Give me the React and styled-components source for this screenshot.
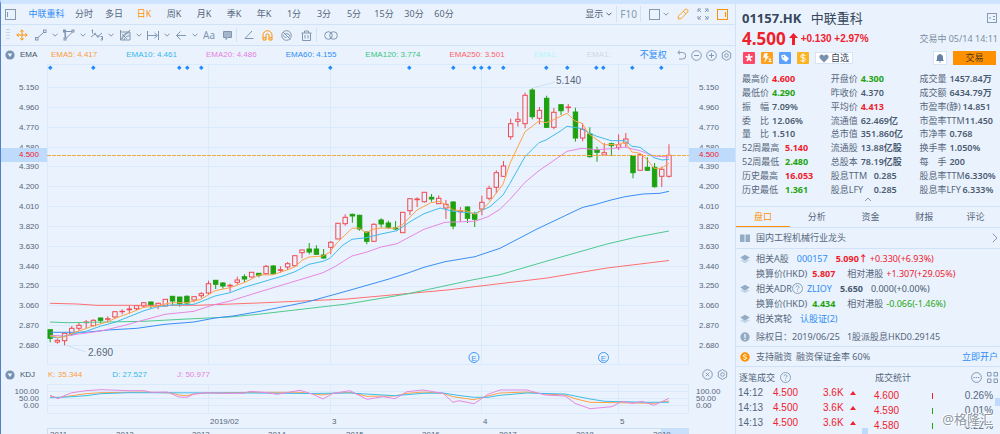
import React from 'react';
import styled, { createGlobalStyle } from 'styled-components';

const CANDLE_STEP = 7.195;

// [type, high, body top, body bottom, low]
const candles = [
  ['d', 265, 265.7, 274.3, 278.3], ['u', 275, 276.3, 278, 279.7], ['u', 269.3, 269.3, 276.7, 281.3],
  ['u', 262, 264.3, 270, 272], ['u', 258.3, 261.3, 264.3, 266.7], ['u', 256, 258, 258.7, 264.3],
  ['u', 255.3, 256.3, 261.7, 262.3], ['d', 253.7, 254, 256.3, 259.3], ['u', 252.3, 254.7, 255.3, 258],
  ['u', 247.3, 247.7, 253, 254.3], ['u', 245.3, 247.3, 247.7, 250.3], ['u', 241.7, 245, 245.7, 249.3],
  ['u', 241, 241.7, 244.7, 246], ['u', 238.3, 238.7, 242, 244], ['d', 237.7, 238, 241, 244.7],
  ['u', 238.7, 239.3, 242, 245.3], ['u', 235.3, 235.3, 242, 242], ['d', 232, 232.3, 237, 241],
  ['d', 233, 233, 239.7, 242.7], ['d', 231.3, 232.3, 239, 241.3], ['u', 232.3, 232.7, 236, 238.3],
  ['u', 228, 229.7, 231.7, 234.3], ['u', 216.7, 219.7, 229, 231], ['d', 216.3, 216.3, 220.3, 225],
  ['d', 218.3, 219, 222, 224.7], ['u', 219.7, 221.3, 222, 227.7], ['u', 212.7, 216, 218.3, 220.7],
  ['d', 210.3, 212.7, 215, 218], ['u', 208.3, 208.3, 213, 213.7], ['d', 209, 209.3, 211.3, 213.3],
  ['u', 201, 202.3, 209.7, 210.7], ['d', 201, 202, 209.7, 210.7], ['u', 202.3, 205.7, 206.3, 208.7],
  ['u', 198, 199.7, 203, 206], ['u', 191.3, 191.7, 201.7, 202.7], ['u', 185.7, 186, 188.7, 194.3],
  ['d', 179, 185, 188, 190.3], ['d', 181.3, 185, 190.3, 191], ['d', 185, 191, 194, 194.7],
  ['u', 177, 178.3, 183.3, 190.3], ['u', 159, 159.3, 175, 175], ['u', 150.3, 153.3, 159.7, 161.7],
  ['d', 149.7, 150.3, 152, 158.7], ['d', 150.7, 151.3, 165, 166.7], ['d', 167.7, 168, 177.3, 180.3],
  ['u', 159.3, 160.3, 177.3, 177.7], ['d', 154.3, 156, 160, 163.3], ['d', 156.7, 159, 163.3, 165],
  ['d', 157, 164, 165, 166], ['u', 148, 148.3, 168.7, 168.7], ['u', 134, 134.7, 146.7, 151],
  ['u', 133.3, 135, 135.7, 143], ['u', 128, 128.3, 137.7, 138.7], ['d', 130, 133.3, 135, 137.7],
  ['u', 131.3, 134.3, 139.7, 140], ['u', 136, 140.3, 144, 155], ['d', 137.3, 138, 162, 165.3],
  ['u', 143, 147, 147.7, 157.7], ['d', 142.3, 143, 154.3, 159], ['d', 147.7, 150, 155.3, 163],
  ['u', 131.7, 138.3, 145, 151.3], ['u', 121.7, 124.3, 134.3, 136.3], ['u', 106.3, 108.7, 123.3, 129.3],
  ['u', 97, 102, 112.3, 113], ['u', 54.7, 59.7, 72.7, 75.7], ['u', 48, 55.3, 57.3, 62.7],
  ['u', 28.7, 31.3, 59.7, 64.3], ['d', 24.3, 26, 52.7, 55.3], ['u', 43, 46.3, 54.3, 60.3],
  ['d', 31.7, 34.3, 63.3, 64], ['u', 44, 48.3, 63.3, 65.3], ['d', 40, 40.7, 46.7, 51],
  ['u', 40, 43, 43.7, 48.7], ['d', 43.7, 48, 74, 77.7], ['u', 59.3, 65.3, 74, 77.3],
  ['d', 63.3, 70, 92.7, 93.7], ['d', 82.7, 86.3, 88.3, 97.7], ['u', 79, 88.7, 91, 91.7],
  ['d', 78.7, 79.7, 81.7, 91.7], ['u', 70.3, 80.7, 83.3, 86], ['u', 69, 75, 79, 83.3],
  ['d', 91, 91.7, 108.7, 114.3], ['u', 89, 90.7, 106.3, 106.3], ['d', 93.3, 103.3, 106.3, 107],
  ['d', 99, 103.3, 122.7, 123.7], ['u', 102.7, 105.3, 112.3, 123], ['u', 80.3, 91.3, 112.3, 113.7],
];

const emaLines = [
  { color: '#ff7070', points: '3,239.3 30,240 50,241.3 150,241.3 211,239 300,235 400,226 500,214 560,204 622,196.5' },
  { color: '#4fc98f', points: '3,258 20,258.7 97,257.3 140,255 183,253 211,250.3 300,240 360,230 425,216 453,210.7 500,197 560,180 590,173 622,167' },
  { color: '#3a8ef5', points: '3,268.3 39,268.3 61,266 90,264.3 118,260.3 147,258 168,254 186,252 211,247.7 260,238 300,227 341,215.3 360,209.3 377,203.3 398,197.7 428,192.7 453,184.3 490,165 530,146 536,143.3 549,140.3 564,136 578,132.7 596,130 613,129.3 622,127.3' },
  { color: '#e787e2', points: '3,271.3 18,272 32,270 54,267 75,262 97,256 118,250.3 147,247.3 166,241 183,237 197,232.7 211,228.3 253,215.7 276,208.7 286,203.7 305,192 319,188.3 334,183 350,179.7 363,172.7 377,165.3 398,158.3 428,157.3 441,152.7 453,145.3 463,135.3 478,118.3 492,106.7 506,97 520,87.3 535,84.3 549,85.7 564,84.7 578,83.3 593,86.7 607,92 622,93' },
  { color: '#3fbdea', points: '3,272.7 11,274 25,270 39,267.3 54,262 68,258.3 82,252.7 97,246.7 111,242.7 125,241 147,240.3 160,235.3 168,232 183,228.7 197,223.3 211,219.3 223,215.7 236,212 248,207.7 262,200.3 276,197.3 283,194.3 296,181 305,175.3 319,173.7 334,170 350,166.7 363,157.7 377,149.7 393,144 406,147.3 428,149.3 443,142.7 456,131 463,119.3 478,92.7 492,78.7 499,76 514,66.7 520,62.3 533,64.3 549,72 564,76.7 578,76.7 585,82.3 593,83.3 607,93.7 615,96 622,95.3' },
  { color: '#ffa14a', points: '3,272 11,273.3 18,272.7 25,269.3 32,267 46,262 61,257.7 68,254.3 82,249.3 97,243.3 111,242 118,240 125,238.7 140,238.7 154,235.3 168,226.7 183,223.7 197,218.7 204,215.3 212,211 226,210.7 240,206 248,202.7 255,196.3 262,193 276,192 283,188 290,178.7 305,164.3 312,164 319,168.7 326,165.3 334,164 348,164.3 355,161 370,146 384,138.7 392,137.3 398,140.3 406,146 420,147 428,150.3 434,146.7 442,138.7 456,120.3 463,99.3 478,67.7 492,57 499,58.7 506,56 520,49.3 528,57 535,59.3 542,70 557,80.7 571,80.7 578,78 585,88 593,89.3 600,95.3 607,104.3 614,104.3 622,99.3' },
];

const kdjLines = [
  { color: '#ffa14a', points: '3,12 11,13.7 25,11.7 39,9.7 54,8.7 97,8 125,9 132,11 140,11.7 147,10 160,9 203,8.3 253,8.3 276,11 286,9.3 303,8.3 320,12.3 348,12 360,9.3 376,8 396,9.3 406,12.7 427,15.7 441,12 453,9 480,8 498,10 518,11 528,14.7 543,18.3 570,18.7 607,19.3 622,17' },
  { color: '#3fbdea', points: '3,13.7 25,12.7 39,11.7 54,9.7 82,8.7 203,9 260,9.5 303,9 336,11 348,11.7 376,9.3 396,9 412,11.5 427,13.3 441,13.3 453,11.3 480,9 518,10 528,12 543,15 558,17.3 600,18.3 622,18.3' },
  { color: '#e787e2', points: '3,11.3 11,14.7 18,11.3 25,8.7 39,6.7 54,5.7 82,6.7 97,6.7 104,8.3 120,8 125,10 132,13 140,13.3 147,10 160,8.7 173,9.3 197,9.3 203,7.3 220,8.7 230,10.3 253,6.3 266,10.3 276,15 286,9.3 303,6.7 320,15.3 336,12.7 348,14.7 360,7.7 376,6 396,9.3 406,18.3 412,16.7 427,19.7 441,10.3 453,6 480,6 498,11 518,12 528,19.3 543,24.7 565,22.7 575,17.3 586,19.3 595,17.3 607,21.3 622,14.3' },
];

const eventDots = [3, 46, 132, 140, 154, 283, 362, 406, 427, 434, 442, 456, 499, 520, 549, 556, 585, 614];
const monthLines = [161.5, 283.5, 434.5, 571.5];
const months = ['2019/02', '3', '4', '5'];
const years = [[2011, 3], [2012, 69], [2013, 145], [2014, 221], [2015, 299], [2016, 375], [2017, 452], [2018, 529], [2019, 606]];
const prices = ['5.150', '4.960', '4.770', '4.580', '4.390', '4.200', '4.010', '3.820', '3.630', '3.440', '3.250', '3.060', '2.870', '2.680'];
const periods = ['分时', '多日', '日K', '周K', '月K', '季K', '年K', '1分', '3分', '5分', '15分', '30分', '60分'];

const emaLegend = [
  ['EMA5: 4.417', '#ff9a3c'],
  ['EMA10: 4.461', '#35b8ea'],
  ['EMA20: 4.486', '#e67ee0'],
  ['EMA60: 4.155', '#2f8cf5'],
  ['EMA120: 3.774', '#38c483'],
  ['EMA250: 3.501', '#ff5f66'],
  ['EMA1:', '#b5f3fb'],
  ['EMA1:', '#ccd9e4'],
];

const kdjLegend = [
  ['K: 35.344', '#ff9a3c'],
  ['D: 27.527', '#35b8ea'],
  ['J: 50.977', '#e67ee0'],
];

const RED = '#f0202c';
const GREEN = '#1ea50f';

// label, value, colour; in reading order, three to a row
const stats = [
  ['最高价', '4.600', RED], ['开盘价', '4.300', GREEN], ['成交量', '1457.84万'],
  ['最低价', '4.290', GREEN], ['昨收价', '4.370'], ['成交额', '6434.79万'],
  ['振　幅', '7.09%'], ['平均价', '4.413', RED], ['市盈率(静)', '14.851'],
  ['委　比', '12.06%'], ['流通值', '62.469亿'], ['市盈率TTM', '11.450'],
  ['量　比', '1.510'], ['总市值', '351.860亿'], ['市净率', '0.768'],
  ['52周最高', '5.140', RED], ['流通股', '13.88亿股'], ['换手率', '1.050%'],
  ['52周最低', '2.480', GREEN], ['总股本', '78.19亿股'], ['每　手', '200'],
  ['历史最高', '16.053', RED], ['股息TTM', '0.285'], ['股息率TTM', '6.330%'],
  ['历史最低', '1.361', GREEN], ['股息LFY', '0.285'], ['股息率LFY', '6.333%'],
];

const ticks = [['14:12', '4.500', '3.6K'], ['14:13', '4.500', '3.6K'], ['14:13', '4.500', '3.6K']];
const levels = [['4.600', RED, '0.26%'], ['4.590', GREEN, '0.01%'], ['4.580', GREEN, '0.22%']];

const Icon = ({ size = 12, w, color = 'currentColor', children }) => (
  <svg width={w || size} height={size} viewBox={`0 0 ${w || size} ${size}`} fill='none' stroke={color} aria-hidden='true'>
    {children}
  </svg>
);

const Chevron = () => (
  <Icon size={6}><path d='M.5 1.7 3 4.2 5.5 1.7' /></Icon>
);

const Fold = () => (
  <Icon size={10}>
    <circle cx='5' cy='5' r='4.6' fill='#7590b0' stroke='none' />
    <path d='M2.6 3.6h4.8L5 7z' fill='#eef5fd' stroke='none' />
  </Icon>
);

const Gear = () => (
  <Icon size={11}>
    <path d='M5.5.6 9.7 3v5L5.5 10.4 1.3 8V3z' strokeLinejoin='round' />
    <circle cx='5.5' cy='5.5' r='1.8' />
  </Icon>
);

const Help = () => (
  <Icon size={11} color='#8aa0b8'>
    <circle cx='5.5' cy='5.5' r='5' />
    <path d='M4 4.3c0-2 3-2 3-.1 0 1.2-1.5 1.2-1.5 2.4M5.5 7.6v1' />
  </Icon>
);

const Layers = () => (
  <Icon size={10} color='none'>
    <path d='M5 4.4 9.8 6.6 5 9.2.2 6.6z' fill='#c3d6e8' />
    <path d='M5 .8 9.8 3.6 5 6.4.2 3.6z' fill='#93abc4' />
  </Icon>
);

const tools = [
  ['趋势线', <><rect x='.5' y='8.5' width='2.5' height='2.5' /><rect x='8.5' y='1' width='2.5' height='2.5' /><path d='M3 8.5 8.5 3.5' /></>],
  ['形状', <><path d='M2 2.5h8L3 9.5zM2 3v6' /><rect x='.5' y='1' width='2' height='2' fill='#eaf3fd' /><rect x='9' y='1' width='2' height='2' fill='#eaf3fd' /><rect x='1' y='9' width='2' height='2' fill='#eaf3fd' /></>],
  ['波浪', <><path d='M.5 1.5 1.5.8v3.7M0 8l4-3 3 2.5 4-3.5M9.5 7.5h2V11h-2M10 9.3h1.5' /><circle cx='4' cy='5' r='.8' /><circle cx='7' cy='7.5' r='.8' /></>],
  ['图形', <><path d='M1.5 1v10H11M1.5 3H11v8M1.5 11 11 1M3 10a6 6 0 0 1 7-6M5 11a5 5 0 0 1 6-4M3 5l5 5' /></>],
  ['测量', <><path d='M.5 2v9M11.5 2v9M1 6.5h8.5M7.5 4l3 2.5-3 2.5' /></>],
  ['箭头', <><path d='M11 6.5H1.5M5.5 2.5l-4 4 4 4' /></>],
];

const CandleChart = () => (
  <Plot viewBox='0 0 642 301' role='img' aria-label='日K'>
    <g stroke='#d9eafc'>
      <path d='M.5 .5H641.5V300.5H.5z' />
      {monthLines.map((x) => <path key={x} d={`M${x} 0V300`} />)}
      {prices.map((p, i) => <path key={p} d={`M0 ${Math.round(23 + i * 19.86) + 0.5}H642`} />)}
    </g>
    {eventDots.map((x) => <path key={x} d={`M${x + 0.3} 1.5l2.3 2.3-2.3 2.3-2.3-2.3z`} fill='#1f8bff' />)}
    <path d='M18 281 39 288M486 24l22-6' stroke='#cfe0f0' />
    {candles.map(([type, high, top, bottom, low], i) => {
      const x = 3.2 + i * CANDLE_STEP;
      const up = type === 'u';
      return (
        <g key={i} stroke={up ? '#f04a50' : '#1fa00f'} strokeWidth='1'>
          <path d={`M${x} ${high}V${top}M${x} ${bottom}V${low}`} />
          <rect x={x - 2.2} y={top} width='4.4' height={Math.max(bottom - top, 0.4)} fill={up ? 'none' : '#1fa00f'} />
        </g>
      );
    })}
    {emaLines.map((l) => <polyline key={l.color} points={l.points} stroke={l.color} />)}
    <path d='M0 91.5H642' stroke='#f0ab45' strokeDasharray='4 1' />
    <Note x='41' y='292'>2.690</Note>
    <Note x='509' y='20'>5.140</Note>
    {[427, 556.5].map((x) => (
      <g key={x}>
        <circle cx={x} cy='293.5' r='5' stroke='#3f97f7' />
        <EventMark x={x} y='296.5'>E</EventMark>
      </g>
    ))}
  </Plot>
);

const KdjChart = () => (
  <Plot viewBox='0 0 642 44' role='img' aria-label='KDJ'>
    <g stroke='#d9eafc'>
      <path d='M.5 .5H641.5V29.5H.5zM0 7.5H642M0 14.5H642M0 21.5H642' />
      {monthLines.map((x) => <path key={x} d={`M${x} 0V29`} />)}
    </g>
    {kdjLines.map((l) => <polyline key={l.color} points={l.points} stroke={l.color} />)}
    {months.map((m, i) => <MonthLabel key={m} x={monthLines[i] + 1.5} y='40'>{m}</MonthLabel>)}
  </Plot>
);

const Timeline = () => (
  <Plot viewBox='0 0 642 20'>
    <rect x='614' y='1' width='28' height='19' fill='#c9e0fc' />
    <path d='M0 .5H642M.5 0V20' stroke='#c9dff6' />
    {years.map(([year, x]) => <MonthLabel key={year} x={x} y='9'>{year}</MonthLabel>)}
  </Plot>
);

const App = () => (
  <>
    <GlobalStyle />
    <Shell>
      <ChartPane>
        <TabBar>
          <IconButton aria-label='侧栏'>
            <Icon size={11}><rect x='.5' y='.5' width='10' height='10' /><path d='M2.5 3v5' /></Icon>
          </IconButton>
          <Periods>
            <Period $wide $color='#2f8cf5'>中联重科</Period>
            {periods.map((p) => <Period key={p} $color={p === '日K' ? '#ff9100' : undefined}>{p}</Period>)}
          </Periods>
          <Display>
            <DisplayButton>显示 <Chevron /></DisplayButton>
            <F10>F10</F10>
          </Display>
          <IconButton aria-label='布局'>
            <Icon size={11}><rect x='.5' y='.5' width='10' height='10' /></Icon><Chevron />
          </IconButton>
          <IconButton aria-label='画线' $color='#ff9f1f'>
            <Icon size={12}><path d='M1.3 8.2 8 1.5q1.2-1 2.4.2t.2 2.4L4 10.7l-2.8.2zM6.3 3.2l2.6 2.6' /></Icon>
          </IconButton>
          <IconButton aria-label='全屏'>
            <Icon size={12}><path d='M1 4V1h3M8 1h3v3M11 8v3H8M4 11H1V8M1 1l3 3M11 1 8 4M11 11 8 8M1 11l3-3' /></Icon>
          </IconButton>
          <IconButton aria-label='右栏' $color='#ff9100'>
            <Icon size={11}><rect x='.5' y='.5' width='10' height='10' /><path d='M8.5 3v5' /></Icon>
          </IconButton>
        </TabBar>

        <Toolbar>
          <Icon w={4} size={12} color='#c3d5e8'><path d='M0 .5h4M0 3.5h4M0 6.5h4M0 9.5h4' /></Icon>
          <Tool aria-label='移动' $w={19} $color='#ff9100'>
            <Icon size={12}><path d='M6 1v10M1 6h10M4.2 2.6 6 .8l1.8 1.8M4.2 9.4 6 11.2l1.8-1.8M2.6 4.2.8 6l1.8 1.8M9.4 4.2 11.2 6 9.4 7.8' /></Icon>
          </Tool>
          {tools.map(([name, shape]) => (
            <Tool key={name} aria-label={name} $w={28}><Icon size={12}>{shape}</Icon><Chevron /></Tool>
          ))}
          <Tool $w={19}>Aa</Tool>
          <Tool aria-label='标注' $w={14}>
            <Icon size={11}><path d='M1.5 1.5h8v6H5.5l-1.5 2v-2H1.5z' fill='#a3b6ca' /></Icon>
          </Tool>
          <Divider />
          <Tool aria-label='角度' $w={18}><Icon size={10}><path d='M8 1 1 8.5h8.5' /></Icon></Tool>
          <Tool aria-label='磁吸' $w={19} $color='#ff9100'>
            <Icon size={11}><path d='M1 10V5.2a4.5 4.5 0 0 1 9 0V10H7V5.3a1.5 1.5 0 0 0-3 0V10zM1 7.8h3M7 7.8h3' /></Icon>
          </Tool>
          <Tool aria-label='隐藏' $w={20}>
            <Icon size={11}><circle cx='5.5' cy='5.5' r='4.8' /><path d='M2 2l7.5 7.5M4.5 3.5q3 0 4.5 2-.5 1-1.5 1.5M3 4.500l-1 1q1.5 2 3.5 2' /></Icon>
          </Tool>
          <Tool aria-label='删除' $w={15}>
            <Icon size={11}><path d='M.5 3h10M3.5 3V1h4v2M1.5 3v7.5h8V3M4 5v3.5M7 5v3.5' /></Icon>
          </Tool>
          <Divider />
          <Tool aria-label='联动' $w={16}>
            <Icon w={14} size={9}><circle cx='4.5' cy='4.5' r='3.8' /><circle cx='9.5' cy='4.5' r='3.8' /></Icon>
          </Tool>
        </Toolbar>

        <Legend>
          <LegendName><Fold />EMA</LegendName>
          {emaLegend.map(([text, color], i) => <LegendItem key={i} $color={color}>{text}</LegendItem>)}
          <LegendTools>
            <TextButton>不复权</TextButton>
            <IconButton aria-label='撤销'><Icon size={10}><path d='M3 .5.8 2.5 3 4.5M1 2.5h4.5a3 3 0 0 1 0 6.5H2' /></Icon></IconButton>
            <IconButton aria-label='缩小'><Icon size={11}><circle cx='5.5' cy='5.5' r='4.8' /><path d='M3 5.5h5' /></Icon></IconButton>
            <IconButton aria-label='放大'><Icon size={11}><circle cx='5.5' cy='5.5' r='4.8' /><path d='M3 5.5h5M5.5 3v5' /></Icon></IconButton>
            <IconButton aria-label='设置'><Gear /></IconButton>
          </LegendTools>
        </Legend>

        <ChartRow>
          <PriceAxis>
            {prices.map((p) => <span key={p}>{p}</span>)}
            <PriceTag>4.500</PriceTag>
          </PriceAxis>
          <CandleChart />
          <PriceAxis $right>
            {prices.map((p) => <span key={p}>{p}</span>)}
            <PriceTag>4.500</PriceTag>
          </PriceAxis>
        </ChartRow>

        <Legend $kdj>
          <LegendName $kdj><Fold />KDJ</LegendName>
          {kdjLegend.map(([text, color]) => <LegendItem key={text} $color={color}>{text}</LegendItem>)}
          <LegendTools>
            <IconButton aria-label='关闭'><Icon size={11}><circle cx='5.5' cy='5.5' r='4.8' /><path d='m3.7 3.7 3.6 3.6M7.3 3.7 3.7 7.3' /></Icon></IconButton>
            <IconButton aria-label='设置'><Gear /></IconButton>
          </LegendTools>
        </Legend>

        <ChartRow>
          <KdjAxis><span>100.00</span><span>50.00</span><span>0.00</span></KdjAxis>
          <KdjChart />
          <KdjAxis $right><span>100.00</span><span>50.00</span><span>0.00</span></KdjAxis>
        </ChartRow>
        <TimelineRow><Timeline /></TimelineRow>
      </ChartPane>

      <QuotePane>
        <QuoteHead>
          <Symbol>01157.HK <small>中联重科</small></Symbol>
          <IconButton aria-label='切换'>
            <Icon size={10}><rect x='.5' y='.5' width='9' height='9' /><path d='M2 5h2M6 3.5h2M6 6.5h2' /></Icon>
          </IconButton>
        </QuoteHead>
        <PriceLine>
          <strong>4.500</strong>
          <Icon w={9} size={12} color='none'><path d='M4.5 0 9 5H6v7H3V5H0z' fill={RED} /></Icon>
          <b>+0.130 +2.97%</b>
          <time>交易中 05/14 14:11</time>
        </PriceLine>
        <Actions>
          <Badge $bg='#ff4766'>
            <Icon size={12} color='#fff'><path d='M6 5.5V2M6 5.5 2.5 4.5M6 5.5l3.5-1M6 5.5 4 9M6 5.5 8 9' strokeWidth='1.6' /></Icon>
          </Badge>
          <Badge $bg='#ff9f1c'>
            <Icon size={12} color='#fff'><path d='M6.5 1.5h-3l-1 4H5L3.500 10l4-5.500h-2z' fill='#fff' strokeWidth='.5' /><path d='M7.5 7H10L8 9.5h2.5' /></Icon>
          </Badge>
          <Badge $bg='#5ba0fb'>
            <Icon size={12} color='none'><path d='M2 3.5 5.5 2.5 10 6.5 7 10 3 7z' fill='#fff' /><circle cx='4.3' cy='4.7' r='.8' fill='#5ba0fb' /></Icon>
          </Badge>
          <Badge $bg='#fbb324'>
            <Icon size={12} color='#fff'><path d='M8.5 4q-.5-1.3-2.5-1.3T3.7 4.2 6 5.9t2.4 1.7T6 9.2 3.5 8M6 1.5v9' /></Icon>
          </Badge>
          <Favorite>
            <Icon w={10} size={9} color='none'><path d='M5 8.5 1 4.6C-.5 2.5 1 .5 2.7.5 4 .5 4.6 1.3 5 2 5.4 1.3 6 .5 7.3.5 9 .5 10.5 2.5 9 4.6z' fill='#7891b0' /></Icon>
            自选
          </Favorite>
          <Bell aria-label='提醒'>
            <Icon w={8} size={9} color='none'><path d='M4 0q3 .5 3 3.5v2L8 7H0l1-1.5v-2Q1 .5 4 0M3 7.5h2L4 9z' fill='#6582a6' /></Icon>
          </Bell>
          <Trade>交易</Trade>
        </Actions>
        <Stats>
          {stats.map(([label, value, color]) => (
            <Stat key={label} $long={label.length > 3} $color={color}>
              <dt>{label}</dt>
              <dd>{value}</dd>
            </Stat>
          ))}
        </Stats>
        <Collapse aria-label='收起'><Icon w={8} size={5}><path d='M1 4 4 1l3 3' /></Icon></Collapse>

        <InfoTabs>
          {['盘口', '分析', '资金', '财报', '评论'].map((t, i) => <InfoTab key={t} $active={i === 0}>{t}</InfoTab>)}
        </InfoTabs>
        <InfoRow $line $height={21}>
          <Icon size={10} color='none'><path d='M0 1.5h4.5V9H0zM5.5 1.5H10V9H5.5z' fill='#93abc4' /></Icon>
          国内工程机械行业龙头
          <Push><Icon w={6} size={10}><path d='m.8.8 4.2 4.2L.8 9.2' /></Icon></Push>
        </InfoRow>
        <Related>
          <InfoRow>
            <Layers />相关A股
            <RelatedLink href='#000157'>000157</RelatedLink>
            <Quote $color={RED}>5.090↑</Quote>
            <Figure $color={RED}>+0.330(+6.93%)</Figure>
          </InfoRow>
          <InfoRow $indent>
            换算价(HKD)<Quote $color={RED} $wide>5.807</Quote>
            相对港股<Figure $color={RED}>+1.307(+29.05%)</Figure>
          </InfoRow>
          <InfoRow>
            <Layers /><Adr>相关ADR<Help /></Adr>
            <TextLink href='#ZLIOY'>ZLIOY</TextLink>
            <Quote>5.650</Quote>
            <Figure>0.000(+0.00%)</Figure>
          </InfoRow>
          <InfoRow $indent>
            换算价(HKD)<Quote $color={GREEN} $wide>4.434</Quote>
            相对港股<Figure $color={GREEN}>-0.066(-1.46%)</Figure>
          </InfoRow>
          <InfoRow>
            <Layers />相关窝轮
            <RelatedLink href='#warrants'>认股证(2)</RelatedLink>
          </InfoRow>
        </Related>
        <InfoRow $line $height={20}>
          <Icon size={10} color='none'><circle cx='5' cy='5' r='4.7' fill='#93abc4' /><path d='M4.4 2h1.2v3.8H4.4zM4.4 6.8h1.2V8H4.4z' fill='#fff' /></Icon>
          <span>除权日：2019/06/25 &nbsp; 1股派股息HKD0.29145</span>
        </InfoRow>
        <InfoRow $line $height={20}>
          <Icon size={10} color='#fff'><circle cx='5' cy='5' r='4.7' fill='#ff9100' stroke='none' /><path d='M6.8 3.5Q6.5 2.7 5 2.7T3.3 3.8 5 5t1.7 1.1T5 7.3 3.2 6.5' /></Icon>
          支持融资
          <Margin>融资保证金率 60%</Margin>
          <Push><TextLink href='#open'>立即开户</TextLink></Push>
        </InfoRow>

        <Deals>
          <DealColumn>
            <DealHead>逐笔成交 <Help /></DealHead>
            <DealTable>
              <tbody>
                {ticks.map(([time, price, volume], i) => (
                  <tr key={i}>
                    <TimeCell>{time}</TimeCell>
                    <PriceCell>{price}</PriceCell>
                    <td><Red>{volume}</Red></td>
                    <td><Icon w={6} size={4} color='none'><path d='M0 4 3 0l3 4z' fill={RED} /></Icon></td>
                  </tr>
                ))}
              </tbody>
            </DealTable>
            <Thumb $bottom />
          </DealColumn>
          <DealColumn $stats>
            <DealHead>
              成交统计
              <Push>
                <Icon size={11}><circle cx='5.5' cy='5.5' r='4.9' /><path d='M2.5 5.5h6' strokeDasharray='1.5 .7' /></Icon>
                <Icon size={11}><path d='M.5.5H4V4H.5zM7 .5h3.5V4H7zM.5 7H4v3.5H.5zM7 7h3.5v3.5H7z' /></Icon>
              </Push>
            </DealHead>
            <DealTable $stats>
              <tbody>
                {levels.map(([price, color, share]) => (
                  <tr key={price}>
                    <td><Red>{price}</Red></td>
                    <td><Bar $color={color} /></td>
                    <td>{share}</td>
                  </tr>
                ))}
              </tbody>
            </DealTable>
            <Thumb />
            <Watermark>@格隆汇</Watermark>
          </DealColumn>
        </Deals>
      </QuotePane>
    </Shell>
  </>
);

const GlobalStyle = createGlobalStyle`
  * {
    box-sizing: border-box;
  }
  body {
    margin: 0;
    overflow: hidden;
    background: #eaf3fd;
    color: #56667c;
    font: 9px/14px 'Noto Sans', 'Noto Sans CJK SC', sans-serif;
  }
  button {
    margin: 0;
    padding: 0;
    border: 0;
    background: none;
    color: inherit;
    font: inherit;
    cursor: pointer;
  }
  a {
    color: #2f8cf5;
    text-decoration: none;
  }
  svg {
    flex: none;
    display: block;
  }
`;

const Shell = styled.main`
  display: flex;
  height: 100vh;
  overflow: hidden;
  border-top: 4px solid #cfe5ff;
  border-left: 1px solid #4f80cb;
`;

const ChartPane = styled.section`
  flex: 1;
  min-width: 0;
`;

const TabBar = styled.div`
  display: flex;
  align-items: center;
  gap: 8px;
  height: 21px;
  padding: 0 7px 0 4px;
  border-bottom: 1px solid #cfe2f7;
`;

const IconButton = styled.button`
  display: flex;
  align-items: center;
  gap: 3px;
  color: ${({ $color }) => $color || '#8499b2'};
`;

const Periods = styled.nav`
  display: flex;
  flex: 1;
`;

const Period = styled.button`
  width: ${({ $wide }) => ($wide ? 45 : 30)}px;
  color: ${({ $color }) => $color || 'inherit'};
  white-space: nowrap;
`;

const Display = styled.div`
  display: flex;
  gap: 4px;
`;

const DisplayButton = styled.button`
  display: flex;
  align-items: center;
  gap: 3px;
`;

const F10 = styled.button`
  padding: 1px 3px;
  border: solid #cfe2f7;
  border-width: 0 1px;
  color: #8499b2;
  font-size: 10px;
`;

const Toolbar = styled.div`
  display: flex;
  align-items: center;
  height: 21px;
  padding-left: 5px;
  border-bottom: 1px solid #cfe2f7;
`;

const Tool = styled.button`
  display: flex;
  align-items: center;
  gap: 5px;
  width: ${({ $w }) => $w}px;
  color: ${({ $color }) => $color || '#8096b0'};
  font-size: 10px;

  &:first-of-type {
    margin-left: 6px;
  }
`;

const Divider = styled.i`
  width: 1px;
  height: 14px;
  margin-right: 7px;
  background: #cfe2f7;
`;

const Legend = styled.div`
  display: flex;
  align-items: center;
  gap: ${({ $kdj }) => ($kdj ? 30 : 29)}px;
  height: ${({ $kdj }) => ($kdj ? 19 : 18)}px;
  padding: 0 7px 0 4px;
  font: 8px/14px 'Liberation Sans', 'Noto Sans CJK SC', sans-serif;
  white-space: nowrap;
`;

const LegendName = styled.span`
  display: flex;
  flex: none;
  align-items: center;
  gap: 5px;
  width: ${({ $kdj }) => ($kdj ? 28 : 32)}px;
  margin-right: -15px;
  color: #44546a;
`;

const LegendItem = styled.span`
  color: ${({ $color }) => $color};
`;

const LegendTools = styled.div`
  display: flex;
  gap: 4px;
  align-items: center;
  margin-left: auto;
`;

const TextButton = styled.button`
  margin-right: 6px;
  color: #2f8cf5;
  font-size: 9px;
`;

const ChartRow = styled.div`
  display: flex;
`;

const PriceAxis = styled.div`
  position: relative;
  display: flex;
  flex: 0 0 46px;
  flex-direction: column;
  justify-content: space-between;
  padding: ${({ $right }) => ($right ? '16px 0 11px 10px' : '16px 8px 11px 0')};
  text-align: ${({ $right }) => ($right ? 'left' : 'right')};
  font: 8px/16px 'Liberation Sans', sans-serif;
`;

const PriceTag = styled.b`
  position: absolute;
  top: 28%;
  left: 0;
  width: 100%;
  padding: inherit;
  padding-top: 0;
  padding-bottom: 0;
  background: #bfdbfb;
  color: ${RED};
  font-weight: 400;
  line-height: 14px;
`;

const KdjAxis = styled.div`
  display: flex;
  flex: 0 0 46px;
  flex-direction: column;
  padding: ${({ $right }) => ($right ? '4px 0 0 7px' : '4px 8px 0 0')};
  text-align: ${({ $right }) => ($right ? 'left' : 'right')};
  font: 8px/7px 'Liberation Sans', sans-serif;
`;

const TimelineRow = styled.div`
  display: flex;
  padding: 0 46px;
`;

const Plot = styled.svg`
  flex: 1;
  min-width: 0;
  fill: none;
`;

const Note = styled.text`
  fill: #56667c;
  font: 10px 'Liberation Sans', sans-serif;
`;

const MonthLabel = styled.text`
  fill: #56667c;
  font: 8px 'Liberation Sans', sans-serif;
`;

const EventMark = styled.text`
  fill: #3f97f7;
  font: 8px 'Liberation Sans', sans-serif;
  text-anchor: middle;
`;

const QuotePane = styled.aside`
  flex: 0 0 265px;
  min-width: 0;
  border-left: 1px solid #cfe2f7;
  white-space: nowrap;
`;

const QuoteHead = styled.header`
  display: flex;
  align-items: center;
  justify-content: space-between;
  height: 26px;
  padding: 2px 3px 0 6px;
`;

const Symbol = styled.h1`
  margin: 0;
  color: #36465c;
  font-size: 13px;
  line-height: 20px;

  small {
    margin-left: 6px;
    font-size: 13px;
    font-weight: 400;
  }
`;

const PriceLine = styled.div`
  display: flex;
  align-items: center;
  height: 17px;
  padding: 0 2px 0 6px;
  color: ${RED};

  strong {
    margin-right: 3px;
    font-size: 17px;
    line-height: 17px;
  }

  b {
    margin-left: 3px;
    font: bold 10px/14px 'Liberation Sans', sans-serif;
  }

  time {
    margin-left: auto;
    color: #7c8da3;
  }
`;

const Actions = styled.div`
  display: flex;
  align-items: center;
  gap: 6px;
  height: 22px;
  padding: 0 4px 0 7px;
`;

const Badge = styled.span`
  border-radius: 1px;
  background: ${({ $bg }) => $bg};
`;

const Favorite = styled.button`
  display: flex;
  align-items: center;
  gap: 2px;
  height: 12px;
  padding: 0 3px;
  border: 1px solid #d5e5f6;
  background: #fff;
  color: #36465c;
  line-height: 10px;
`;

const Bell = styled.button`
  display: grid;
  place-items: center;
  width: 14px;
  height: 14px;
  margin-left: auto;
  border: 1px solid #d5e5f6;
  background: #fff;
`;

const Trade = styled.button`
  width: 43px;
  height: 14px;
  background: #ff9100;
  color: #4a3a20;
`;

const Stats = styled.dl`
  display: grid;
  grid-template-columns: 11fr 11fr 10fr;
  grid-auto-rows: 1fr;
  align-items: center;
  height: 124px;
  margin: 3px 0 0;
  padding-left: 6px;
  line-height: 13px;
`;

const Stat = styled.div`
  display: flex;
  gap: ${({ $long }) => ($long ? 0 : 3)}px;

  dt {
    min-width: ${({ $long }) => ($long ? 43 : 27)}px;
  }

  dd {
    margin: 0;
    color: ${({ $color }) => $color || '#4b5b72'};
    font-weight: ${({ $color }) => ($color ? 700 : 600)};
  }
`;

const Collapse = styled.button`
  display: flex;
  justify-content: center;
  width: 100%;
  padding: 1px 0 4px;
  color: #8499b2;
`;

const InfoTabs = styled.nav`
  display: grid;
  grid-template-columns: repeat(4, 11fr) 10fr;
  height: 22px;
  border: solid #cfe2f7;
  border-width: 1px 0;
`;

const InfoTab = styled.button`
  border-bottom: 1px solid ${({ $active }) => ($active ? '#ff9100' : 'transparent')};
  color: ${({ $active }) => ($active ? '#ff9100' : 'inherit')};
`;

const InfoRow = styled.div`
  display: flex;
  align-items: center;
  gap: ${({ $indent }) => ($indent ? 3 : 6)}px;
  height: ${({ $height }) => $height || 15}px;
  padding: 0 2px 0 ${({ $indent }) => ($indent ? 20 : 4)}px;
  border-bottom: ${({ $line }) => ($line ? '1px solid #cfe2f7' : '0')};
`;

const Related = styled.div`
  padding: 2px 0 1px;
`;

const Push = styled.span`
  display: flex;
  align-items: center;
  gap: 5px;
  margin-left: auto;
  color: #8499b2;
`;

const Margin = styled.span`
  margin-left: -2px;
`;

const TextLink = styled.a`
  color: #2f8cf5;
`;

const RelatedLink = styled(TextLink)`
  margin-left: 2px;
`;

const Adr = styled.span`
  display: flex;
  align-items: center;
  margin-right: -2px;
`;

const Figure = styled.span`
  color: ${({ $color }) => $color || '#4b5b72'};
`;

const Quote = styled(Figure)`
  min-width: ${({ $wide }) => ($wide ? 32 : 29)}px;
  margin-left: 2px;
  margin-right: ${({ $wide }) => ($wide ? 0 : -4)}px;
  font-weight: 700;
`;

const Deals = styled.div`
  display: grid;
  grid-template-columns: 1fr 1fr;
`;

const DealColumn = styled.section`
  position: relative;
  padding: ${({ $stats }) => ($stats ? '3px 2px 0 6px' : '3px 0 0 2px')};
`;

const DealHead = styled.h2`
  display: flex;
  align-items: center;
  gap: 5px;
  height: 15px;
  margin: 0;
  padding-left: 1px;
  font-size: 9px;
  font-weight: 400;
`;

const DealTable = styled.table`
  width: ${({ $stats }) => ($stats ? '96%' : '92%')};
  margin-top: ${({ $stats }) => ($stats ? 3 : 0)}px;
  border-spacing: 0;
  font: 10px/15px 'Liberation Sans', sans-serif;

  td {
    height: 15px;
    padding: 0;
  }

  td:last-child {
    text-align: right;
  }
`;

const TimeCell = styled.td`
  width: 35px;
`;

const PriceCell = styled.td`
  width: 50px;
  color: ${RED};
`;

const Red = styled.span`
  color: ${RED};
`;

const Bar = styled.i`
  display: block;
  width: 1px;
  height: 6px;
  margin-left: 14px;
  background: ${({ $color }) => $color};
`;

const Thumb = styled.i`
  position: absolute;
  top: ${({ $bottom }) => ($bottom ? 61 : 31)}px;
  right: 0;
  width: ${({ $bottom }) => ($bottom ? 6 : 5)}px;
  height: 8px;
  background: #bfdbfb;
`;

const Watermark = styled.span`
  position: absolute;
  top: 42px;
  right: 7px;
  color: #8d98a6;
  font-size: 13px;
  line-height: 20px;
  text-shadow: 1px 1px 0 #fff, -1px -1px 0 #fff;
`;

export default App;
